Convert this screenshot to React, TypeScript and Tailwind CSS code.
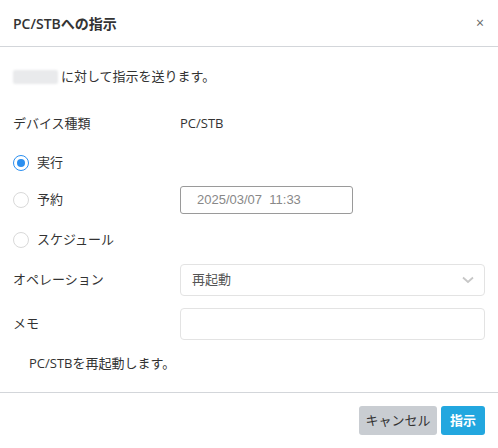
const font = {
  fontFamily: '"Open Sans", "Noto Sans CJK JP", sans-serif',
};

function Radio({ checked, label }: { checked?: boolean; label: string }) {
  return (
    <label className="flex items-center gap-[8px] text-[13px] text-[#333]">
      <span
        className={`flex h-[16px] w-[16px] items-center justify-center rounded-full border ${
          checked ? "border-[#2b8ff0] border-[1.5px]" : "border-[#d9d9d9]"
        } bg-white`}
      >
        {checked && <span className="h-[8px] w-[8px] rounded-full bg-[#2b8ff0]" />}
      </span>
      {label}
    </label>
  );
}

export default function App() {
  return (
    <div className="h-[448px] w-[498px] bg-white text-[#333]" style={font}>
      {/* Header */}
      <div className="flex h-[47px] items-center justify-between border-b border-[#d3d6da] pl-[13px] pr-[14px]">
        <h1 className="text-[14px] font-semibold text-[#333]">PC/STBへの指示</h1>
        <button className="text-[14px] leading-none text-[#666]">×</button>
      </div>

      {/* Body */}
      <div className="h-[345px] px-[13px] pt-[20px] text-[13px]">
        <div className="flex h-[20px] items-center">
          <span className="mr-[3px] h-[14px] w-[45px] rounded-[2px] bg-[#e9eaec] blur-[1px]" />
          <span>に対して指示を送ります。</span>
        </div>

        <div className="mt-[27px] flex h-[20px] items-center">
          <span className="w-[167px]">デバイス種類</span>
          <span>PC/STB</span>
        </div>

        <div className="mt-[19px] flex h-[20px] items-center">
          <Radio checked label="実行" />
        </div>

        <div className="mt-[13px] flex h-[27px] items-center">
          <div className="w-[167px]">
            <Radio label="予約" />
          </div>
          <div
            className="flex h-[28px] w-[173px] items-center rounded-[3px] border border-[#9a9a9a] pl-[16px] text-[13px] text-[#888]"
            style={{ fontFamily: '"Liberation Sans", Arial, sans-serif' }}
          >
            2025/03/07&nbsp;&nbsp;11:33
          </div>
        </div>

        <div className="mt-[17px] flex h-[20px] items-center">
          <Radio label="スケジュール" />
        </div>

        <div className="mt-[14px] flex h-[32px] items-center">
          <span className="w-[167px]">オペレーション</span>
          <div className="flex h-[32px] flex-1 items-center justify-between rounded-[4px] border border-[#e3e3e3] pl-[11px] pr-[10px]">
            <span className="text-[#555]">再起動</span>
            <svg width="12" height="8" viewBox="0 0 12 8" fill="none">
              <path d="M1 1.5l5 4.5 5-4.5" stroke="#c7c7c7" strokeWidth="1.8" />
            </svg>
          </div>
        </div>

        <div className="mt-[12px] flex h-[32px] items-center">
          <span className="w-[167px]">メモ</span>
          <div className="h-[32px] flex-1 rounded-[4px] border border-[#e3e3e3]" />
        </div>

        <p className="mt-[14px] pl-[16px] text-[13px]">PC/STBを再起動します。</p>
      </div>

      {/* Footer */}
      <div className="flex h-[56px] items-center justify-end gap-[4px] border-t border-[#d3d6da] pr-[13px]">
        <button className="h-[29px] w-[78px] rounded-[3px] bg-[#c9cdd2] text-[13px] text-[#333]">
          キャンセル
        </button>
        <button className="h-[29px] w-[44px] rounded-[3px] bg-[#22a7df] text-[13px] font-semibold text-white">
          指示
        </button>
      </div>
    </div>
  );
}
